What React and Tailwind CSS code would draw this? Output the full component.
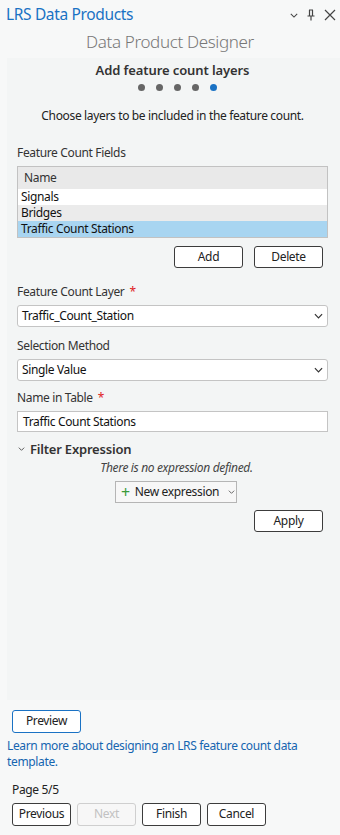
// Panel "LRS Data Products" — langkah terakhir wizard Data Product Designer.
const font = { fontFamily: '"Noto Sans", "Open Sans", sans-serif' }

function Chevron({ className = '' }) {
  return (
    <svg viewBox="0 0 10 6" className={className} fill="none" stroke="currentColor" strokeWidth="1.3">
      <path d="M1 1l4 4 4-4" />
    </svg>
  )
}

function Btn({ children, className = '' }) {
  return (
    <button
      className={`h-[22px] rounded-[3px] border border-[#3c3c3c] bg-white text-[12px] leading-none text-[#222] ${className}`}
    >
      {children}
    </button>
  )
}

function Label({ children, required }) {
  return (
    <div className="text-[12px] leading-[16px] text-[#333]">
      {children}
      {required && <span className="ml-[5px] align-top text-[#e0201f]">*</span>}
    </div>
  )
}

function Select({ value }) {
  return (
    <div className="flex h-[22px] items-center justify-between rounded-[3px] border border-[#c4c4c4] bg-white pl-[4px] pr-[4px]">
      <span className="text-[12px] text-[#111]">{value}</span>
      <Chevron className="w-[9px] h-[6px] text-[#333]" />
    </div>
  )
}

export default function App() {
  return (
    <div style={font} className="w-[340px] h-[835px] bg-[#f7f8f8] flex flex-col overflow-hidden tracking-[-0.35px]">
      <div className="h-[30px] flex items-center justify-between pl-[6px] pr-[4px]">
        <span className="text-[15.5px] text-[#1a72c4]">LRS Data Products</span>
        <div className="flex items-center gap-[8px] text-[#444]">
          <Chevron className="w-[8px] h-[5px]" />
          <svg viewBox="0 0 10 12" className="w-[10px] h-[12px]" fill="none" stroke="currentColor" strokeWidth="1.2">
            <path d="M3 1h4M3.5 1v6M6.5 1v6M1.5 7h7M5 7v4.5" />
          </svg>
          <svg viewBox="0 0 12 12" className="w-[12px] h-[12px]" fill="none" stroke="currentColor" strokeWidth="1.2">
            <path d="M1 1l10 10M11 1L1 11" />
          </svg>
        </div>
      </div>
      <div className="h-[24px] text-center text-[17px] leading-[24px] font-light text-[#777]">Data Product Designer</div>

      <div className="mt-[4px] ml-[7px] h-[642px] bg-[#f3f5f5] pl-[10px] pr-[12px] flex flex-col">
        <div className="mt-[3px] text-center text-[13px] leading-[18px] font-semibold text-[#333] tracking-[-0.1px]">Add feature count layers</div>
        <div className="mt-[5px] flex justify-center gap-[11px] pl-[9px]">
          {[0, 1, 2, 3, 4].map((i) => (
            <span key={i} className={`w-[7px] h-[7px] rounded-full ${i === 4 ? 'bg-[#1a72c4]' : 'bg-[#666]'}`} />
          ))}
        </div>
        <div className="mt-[17px] text-center text-[12px] leading-[16px] text-[#222]">
          Choose layers to be included in the feature count.
        </div>

        <div className="mt-[21px]"><Label>Feature Count Fields</Label></div>
        <div className="mt-[5px] border border-[#c2c2c2] bg-white">
          <div className="h-[22px] flex items-center pl-[6px] bg-[#e9e9e9] text-[12px] text-[#333]">Name</div>
          <div className="h-[16px] flex items-center pl-[3px] bg-white text-[12px] text-[#111]">Signals</div>
          <div className="h-[16px] flex items-center pl-[3px] bg-[#ebebeb] text-[12px] text-[#111]">Bridges</div>
          <div className="h-[16px] flex items-center pl-[3px] bg-[#a8d5f1] text-[12px] text-[#111]">Traffic Count Stations</div>
        </div>
        <div className="mt-[8px] flex justify-end gap-[11px] pr-[5px]">
          <Btn className="w-[69px]">Add</Btn>
          <Btn className="w-[69px]">Delete</Btn>
        </div>

        <div className="mt-[16px]"><Label required>Feature Count Layer</Label></div>
        <div className="mt-[5px]"><Select value="Traffic_Count_Station" /></div>
        <div className="mt-[11px]"><Label>Selection Method</Label></div>
        <div className="mt-[5px]"><Select value="Single Value" /></div>
        <div className="mt-[9px]"><Label required>Name in Table</Label></div>
        <div className="mt-[5px] h-[21px] flex items-center border border-[#c4c4c4] bg-white pl-[5px] text-[12px] text-[#111]">
          Traffic Count Stations
        </div>

        <div className="mt-[9px] flex items-center gap-[5px] pl-[1px]">
          <Chevron className="w-[7px] h-[4px] text-[#444]" />
          <span className="text-[13px] leading-[16px] font-semibold text-[#333] tracking-[-0.2px]">Filter Expression</span>
        </div>
        <div className="mt-[3px] text-center pl-[8px] text-[12px] leading-[16px] italic text-[#444]">
          There is no expression defined.
        </div>
        <div className="mt-[5px] flex justify-center pl-[7px]">
          <div className="h-[22px] w-[122px] flex items-center gap-[5px] border border-[#b5b5b5] bg-[#f7f7f7] pl-[5px] whitespace-nowrap">
            <span className="text-[16px] leading-none text-[#3a9a3a]">+</span>
            <span className="text-[12px] text-[#222]">New expression</span>
            <Chevron className="ml-[4px] w-[7px] h-[4px] text-[#555]" />
          </div>
        </div>
        <div className="mt-[7px] flex justify-end pr-[5px]">
          <Btn className="w-[69px]">Apply</Btn>
        </div>
      </div>

      <div className="pl-[12px] mt-[7px]">
        <button className="h-[23px] w-[69px] rounded-[3px] border border-[#1a72c4] bg-white text-[12px] text-[#222]">Preview</button>
      </div>
      <div className="mt-[5px] pl-[7px] pr-[20px] text-[12px] leading-[16px] text-[#1565b0]">
        Learn more about designing an LRS feature count data template.
      </div>
      <div className="mt-[12px] pl-[12px] text-[12px] leading-[16px] text-[#222]">Page 5/5</div>
      <div className="mt-[5px] pl-[12px] flex gap-[6px]">
        <Btn className="w-[59px] h-[23px]">Previous</Btn>
        <button className="w-[59px] h-[23px] rounded-[3px] border border-[#cfcfcf] bg-[#f7f7f7] text-[12px] text-[#c2c2c2]">Next</button>
        <Btn className="w-[59px] h-[23px]">Finish</Btn>
        <Btn className="w-[59px] h-[23px]">Cancel</Btn>
      </div>
    </div>
  )
}
